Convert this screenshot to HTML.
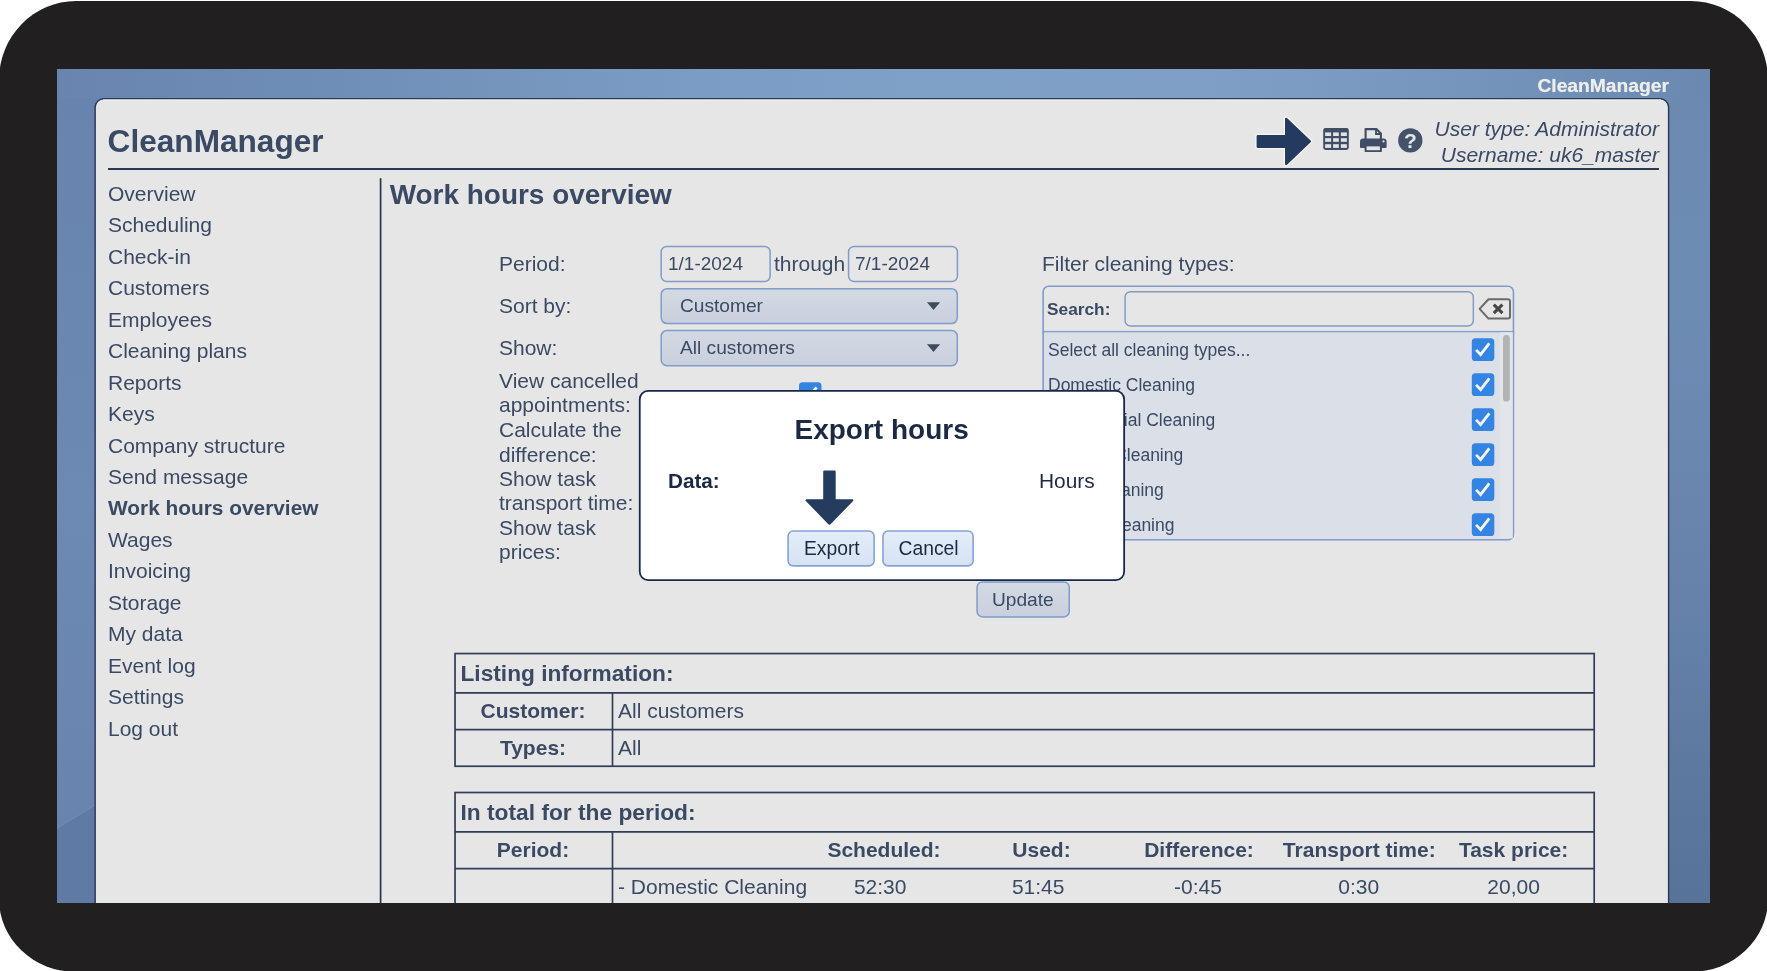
<!DOCTYPE html>
<html lang="en">
<head>
<meta charset="utf-8">
<title>CleanManager - Work hours overview</title>
<style>
html,body{margin:0;padding:0;}
body{width:1767px;height:971px;position:relative;overflow:hidden;background:#fff;
  font-family:"Liberation Sans",Arial,Helvetica,sans-serif;color:#3b4a64;}
.abs,.t{position:absolute;}
.t{white-space:nowrap;line-height:1;font-size:21px;}
.b{font-weight:bold;}
.frame{left:-1px;top:1px;width:1769px;height:971px;background:#211f20;border-radius:77px 77px 77px 77px / 79px 79px 73px 73px;}
.screen{left:57px;top:69px;width:1653px;height:834px;overflow:hidden;
  background:linear-gradient(90deg,#6985af 0%,#6b88b2 6%,#6e8db6 15%,#7595bd 27%,#7b9cc4 39%,#7fa0c7 52%,#7f9fc6 69%,#7a9ac1 78%,#7696bd 84%,#6f8eb5 93%,#6b89b0 100%);}
.screen .ls{left:0;top:29px;width:40px;height:805px;background:linear-gradient(180deg,#6884ae 0%,#6a88b2 40%,#6c8ab4 50%,#6985b0 80%,#6783ae 92%,#6380aa 100%);}
.screen .rs{right:0;top:29px;width:43px;height:805px;background:linear-gradient(180deg,#6c8ab1 0%,#6d8cb4 25%,#6884ad 55%,#6380a8 68%,#5c789f 85%,#58739a 100%);}
.menu .t{left:108px;}

.li .t{left:1048px;font-size:17.5px;}
</style>
</head>
<body>
<div id="root" style="position:absolute;left:0;top:0;width:1767px;height:971px;will-change:transform;">
<div class="abs frame"></div>
<div class="abs screen">
  <div class="abs ls"></div><div class="abs rs"></div><svg class="abs" style="left:0;top:700px;" width="40" height="134" viewBox="57 769 40 134"><path d="M57 828.5 L97 804.5 V903 H57 Z" fill="#5f7ba5"/><path d="M57 828 L97 804" stroke="#7590b8" stroke-width="1.1" stroke-opacity=".6" fill="none"/></svg>
  <svg class="abs" style="left:0;top:0;" width="1653" height="834" viewBox="57 69 1653 834"><rect x="95.15" y="98.7" width="1573.45" height="900" rx="8.6" fill="#e6e6e6" stroke="#2d3a54" stroke-width="1.45"/><rect x="103" y="99.45" width="1558" height="1" fill="#fbfbfb" opacity=".85"/></svg>
</div>

<!-- top-right brand -->
<div class="t b" style="right:98px;top:76px;font-size:19.25px;color:#ededec;text-shadow:0 0 .7px rgba(237,237,236,.8);">CleanManager</div>

<!-- header -->
<div class="t b" style="left:107.6px;top:126px;font-size:31.6px;">CleanManager</div>
<div class="abs" style="left:108px;top:168px;width:1551px;height:2px;background:#2a3853;"></div>
<div class="t" style="right:108px;top:117.7px;font-size:21px;font-style:italic;">User type: Administrator</div>
<div class="t" style="right:108px;top:143.9px;font-size:21px;font-style:italic;">Username: uk6_master</div>

<!-- sidebar -->
<div class="menu">
<div class="t" style="top:183px;">Overview</div>
<div class="t" style="top:214px;">Scheduling</div>
<div class="t" style="top:246px;">Check-in</div>
<div class="t" style="top:277px;">Customers</div>
<div class="t" style="top:309px;">Employees</div>
<div class="t" style="top:340px;">Cleaning plans</div>
<div class="t" style="top:372px;">Reports</div>
<div class="t" style="top:403px;">Keys</div>
<div class="t" style="top:435px;">Company structure</div>
<div class="t" style="top:466px;">Send message</div>
<div class="t b" style="top:498px;font-size:20.85px;">Work hours overview</div>
<div class="t" style="top:529px;">Wages</div>
<div class="t" style="top:560px;">Invoicing</div>
<div class="t" style="top:592px;">Storage</div>
<div class="t" style="top:623px;">My data</div>
<div class="t" style="top:655px;">Event log</div>
<div class="t" style="top:686px;">Settings</div>
<div class="t" style="top:718px;">Log out</div>
</div>
<svg class="abs" style="left:378px;top:178px;" width="5" height="725" viewBox="378 178 5 725"><rect x="379.75" y="178.2" width="1.7" height="726" fill="#27354f"/></svg>

<!-- title -->
<div class="t b" style="left:389.7px;top:181px;font-size:27.95px;">Work hours overview</div>


<!-- form -->
<div class="t" style="left:499px;top:253px;">Period:</div>
<svg class="abs" style="left:659px;top:244px;" width="113" height="40" viewBox="659 244 113 40"><rect x="661.17" y="246.48" width="108.95" height="35.05" rx="5.5" fill="#e6e6e6" stroke="#7f9cca" stroke-width="1.5"/></svg>
<div class="t" style="left:668px;top:254px;font-size:19px;">1/1-2024</div>
<div class="t" style="left:774px;top:253px;">through</div>
<svg class="abs" style="left:846px;top:244px;" width="114" height="40" viewBox="846 244 114 40"><rect x="848.57" y="246.48" width="108.85" height="35.05" rx="5.5" fill="#e6e6e6" stroke="#7f9cca" stroke-width="1.5"/></svg>
<div class="t" style="left:855px;top:254px;font-size:19px;">7/1-2024</div>

<div class="t" style="left:499px;top:295px;">Sort by:</div>
<svg class="abs" style="left:659px;top:287px;" width="301" height="38" viewBox="659 287 301 38"><defs><linearGradient id="gs" x1="0" y1="0" x2="0" y2="1"><stop offset="0" stop-color="#d3dae3"/><stop offset="1" stop-color="#c9d0dd"/></linearGradient><linearGradient id="gb" x1="0" y1="0" x2="0" y2="1"><stop offset="0" stop-color="#e4edf9"/><stop offset="1" stop-color="#d6e2f3"/></linearGradient></defs><rect x="661.2" y="288.65" width="296.1" height="34.9" rx="5.8" fill="url(#gs)" stroke="#7f9cca" stroke-width="1.5"/></svg>
<div class="t" style="left:680px;top:296px;font-size:19.15px;">Customer</div>
<svg class="abs" style="left:925px;top:300px;" width="18" height="12" viewBox="925 300 18 12"><path d="M926.9 302.3 H940.1 L933.5 310 Z" fill="#3f4a60"/></svg>

<div class="t" style="left:499px;top:337px;">Show:</div>
<svg class="abs" style="left:659px;top:328px;" width="301" height="39" viewBox="659 328 301 39"><defs><linearGradient id="gs" x1="0" y1="0" x2="0" y2="1"><stop offset="0" stop-color="#d3dae3"/><stop offset="1" stop-color="#c9d0dd"/></linearGradient><linearGradient id="gb" x1="0" y1="0" x2="0" y2="1"><stop offset="0" stop-color="#e4edf9"/><stop offset="1" stop-color="#d6e2f3"/></linearGradient></defs><rect x="661.2" y="330.45" width="296.1" height="35.2" rx="5.8" fill="url(#gs)" stroke="#7f9cca" stroke-width="1.5"/></svg>
<div class="t" style="left:680px;top:338px;font-size:19.15px;">All customers</div>
<svg class="abs" style="left:925px;top:342px;" width="18" height="12" viewBox="925 342 18 12"><path d="M926.9 344.3 H940.1 L933.5 352 Z" fill="#3f4a60"/></svg>

<div class="t" style="left:499px;top:370px;">View cancelled</div>
<div class="t" style="left:499px;top:394px;">appointments:</div>
<div class="t" style="left:499px;top:419px;">Calculate the</div>
<div class="t" style="left:499px;top:444px;">difference:</div>
<div class="t" style="left:499px;top:468px;">Show task</div>
<div class="t" style="left:499px;top:492px;">transport time:</div>
<div class="t" style="left:499px;top:517px;">Show task</div>
<div class="t" style="left:499px;top:541px;">prices:</div>
<svg class="abs" style="left:799px;top:382px;" width="25" height="25" viewBox="0 0 25 25"><g transform="translate(0.00 0.30)"><rect x="0" y="0" width="22.5" height="22.7" rx="3.6" fill="#3484e4"/><path d="M4.3 11.6 L8.8 16.3 L17.5 5.0" fill="none" stroke="#fbf8f2" stroke-width="2.8" stroke-linejoin="miter"/></g></svg>

<!-- filter -->
<div class="t" style="left:1042px;top:253px;">Filter cleaning types:</div>
<svg class="abs" style="left:1041px;top:284px;" width="476" height="258" viewBox="1041 284 476 258"><defs><clipPath id="fc"><rect x="1042.4" y="285.5" width="471.8" height="255" rx="5.5"/></clipPath></defs><g clip-path="url(#fc)"><rect x="1042" y="285" width="473" height="47" fill="#e6e6e6"/><rect x="1042" y="331.6" width="473" height="209" fill="#dadfe8"/><rect x="1042" y="330.9" width="473" height="1.4" fill="#839fcb"/></g><rect x="1043.15" y="286.25" width="470.3" height="253.5" rx="5.5" fill="none" stroke="#7f9cca" stroke-width="1.6"/></svg>
<div class="t b" style="left:1047px;top:300.5px;font-size:17.3px;">Search:</div>
<svg class="abs" style="left:1123px;top:290px;" width="353" height="38" viewBox="1123 290 353 38"><rect x="1125.08" y="291.68" width="348.25" height="34.35" rx="5.5" fill="#e6e6e6" stroke="#7f9cca" stroke-width="1.5"/></svg>
<svg class="abs" style="left:1477.4px;top:296px;" width="36" height="26" viewBox="0 0 36 26"><path d="M11.5 3.2 H31 a2 2 0 0 1 2 2 V20.6 a2 2 0 0 1 -2 2 H11.5 L2.6 12.9 Z" fill="none" stroke="#6a6a6a" stroke-width="2" stroke-linejoin="round"/><path d="M16.8 8.6 L25.4 17.2 M25.4 8.6 L16.8 17.2" stroke="#474747" stroke-width="3.1" stroke-linecap="butt"/></svg>
<div class="li">
<div class="t" style="top:341.5px;">Select all cleaning types...</div>
<div class="t" style="top:376.5px;">Domestic Cleaning</div>
<div class="t" style="top:411.5px;">Commercial Cleaning</div>
<div class="t" style="top:446.5px;">Regular Cleaning</div>
<div class="t" style="top:481.5px;">Deep Cleaning</div>
<div class="t" style="top:516.5px;">Carpet Cleaning</div>
</div>
<svg class="abs" style="left:1499px;top:332px;" width="15" height="208" viewBox="1499 332 15 208"><rect x="1499.8" y="332.3" width="12.9" height="206.2" fill="#e3e5e9"/><rect x="1503" y="335" width="6.8" height="66.6" rx="3.4" fill="#b3b3b3"/></svg>
<svg class="abs" style="left:1471px;top:338px;" width="25" height="25" viewBox="0 0 25 25"><g transform="translate(0.80 0.30)"><rect x="0" y="0" width="22.5" height="22.7" rx="3.6" fill="#3484e4"/><path d="M4.3 11.6 L8.8 16.3 L17.5 5.0" fill="none" stroke="#fbf8f2" stroke-width="2.8" stroke-linejoin="miter"/></g></svg>
<svg class="abs" style="left:1471px;top:373px;" width="25" height="25" viewBox="0 0 25 25"><g transform="translate(0.80 0.30)"><rect x="0" y="0" width="22.5" height="22.7" rx="3.6" fill="#3484e4"/><path d="M4.3 11.6 L8.8 16.3 L17.5 5.0" fill="none" stroke="#fbf8f2" stroke-width="2.8" stroke-linejoin="miter"/></g></svg>
<svg class="abs" style="left:1471px;top:408px;" width="25" height="25" viewBox="0 0 25 25"><g transform="translate(0.80 0.30)"><rect x="0" y="0" width="22.5" height="22.7" rx="3.6" fill="#3484e4"/><path d="M4.3 11.6 L8.8 16.3 L17.5 5.0" fill="none" stroke="#fbf8f2" stroke-width="2.8" stroke-linejoin="miter"/></g></svg>
<svg class="abs" style="left:1471px;top:443px;" width="25" height="25" viewBox="0 0 25 25"><g transform="translate(0.80 0.30)"><rect x="0" y="0" width="22.5" height="22.7" rx="3.6" fill="#3484e4"/><path d="M4.3 11.6 L8.8 16.3 L17.5 5.0" fill="none" stroke="#fbf8f2" stroke-width="2.8" stroke-linejoin="miter"/></g></svg>
<svg class="abs" style="left:1471px;top:478px;" width="25" height="25" viewBox="0 0 25 25"><g transform="translate(0.80 0.30)"><rect x="0" y="0" width="22.5" height="22.7" rx="3.6" fill="#3484e4"/><path d="M4.3 11.6 L8.8 16.3 L17.5 5.0" fill="none" stroke="#fbf8f2" stroke-width="2.8" stroke-linejoin="miter"/></g></svg>
<svg class="abs" style="left:1471px;top:513px;" width="25" height="25" viewBox="0 0 25 25"><g transform="translate(0.80 0.30)"><rect x="0" y="0" width="22.5" height="22.7" rx="3.6" fill="#3484e4"/><path d="M4.3 11.6 L8.8 16.3 L17.5 5.0" fill="none" stroke="#fbf8f2" stroke-width="2.8" stroke-linejoin="miter"/></g></svg>

<!-- update button -->
<svg class="abs" style="left:975px;top:580px;" width="97" height="40" viewBox="975 580 97 40"><defs><linearGradient id="gs" x1="0" y1="0" x2="0" y2="1"><stop offset="0" stop-color="#d3dae3"/><stop offset="1" stop-color="#c9d0dd"/></linearGradient><linearGradient id="gb" x1="0" y1="0" x2="0" y2="1"><stop offset="0" stop-color="#e4edf9"/><stop offset="1" stop-color="#d6e2f3"/></linearGradient></defs><rect x="977.05" y="581.95" width="92.2" height="35.0" rx="5.5" fill="url(#gs)" stroke="#7f9cca" stroke-width="1.5"/></svg>
<div class="t" style="left:992px;top:589.5px;font-size:19.15px;">Update</div>

<!-- table 1 -->
<svg class="abs" style="left:450px;top:648px;" width="1150" height="255" viewBox="450 648 1150 255"><g fill="none" stroke="#303e59" stroke-width="1.7"><rect x="455.05" y="653.55" width="1139.15" height="112.7"/><path d="M455 692.8 H1594.2 M455 729.6 H1594.2 M612.5 692.8 V766.2"/><rect x="455.05" y="792.5" width="1139.15" height="140"/><path d="M455 831.9 H1594.2 M455 868.6 H1594.2 M612.5 831.9 V910"/></g></svg>
<div class="t b" style="left:460.5px;top:662px;font-size:22.7px;">Listing information:</div>
<div class="t b" style="left:454px;width:158px;text-align:center;top:700px;font-size:21px;">Customer:</div>
<div class="t" style="left:618px;top:700px;">All customers</div>
<div class="t b" style="left:454px;width:158px;text-align:center;top:737px;font-size:21px;">Types:</div>
<div class="t" style="left:618px;top:737px;">All</div>

<!-- table 2 -->
<div class="t b" style="left:460.5px;top:801px;font-size:22.75px;">In total for the period:</div>
<div class="t b" style="left:454px;width:158px;text-align:center;top:839px;font-size:21px;">Period:</div>
<div class="t b" style="left:784px;width:200px;text-align:center;top:839px;font-size:21px;">Scheduled:</div>
<div class="t b" style="left:941.5px;width:200px;text-align:center;top:839px;font-size:21px;">Used:</div>
<div class="t b" style="left:1099px;width:200px;text-align:center;top:839px;font-size:21px;">Difference:</div>
<div class="t b" style="left:1259.3px;width:200px;text-align:center;top:839px;font-size:21px;">Transport time:</div>
<div class="t b" style="left:1413.6px;width:200px;text-align:center;top:839px;font-size:21px;">Task price:</div>
<div class="t" style="left:618px;top:876px;">- Domestic Cleaning</div>
<div class="t" style="left:780.2px;width:200px;text-align:center;top:876px;">52:30</div>
<div class="t" style="left:938.2px;width:200px;text-align:center;top:876px;">51:45</div>
<div class="t" style="left:1098px;width:200px;text-align:center;top:876px;">-0:45</div>
<div class="t" style="left:1258.7px;width:200px;text-align:center;top:876px;">0:30</div>
<div class="t" style="left:1413.6px;width:200px;text-align:center;top:876px;">20,00</div>

<!-- dialog -->
<svg class="abs" style="left:637px;top:388px;" width="490" height="195" viewBox="637 388 490 195"><rect x="639.75" y="390.85" width="484.4" height="189.2" rx="8.3" fill="#fff" stroke="#19294a" stroke-width="1.8"/></svg>
<div class="t b" style="left:794.5px;top:415.5px;font-size:28px;color:#1b2944;">Export hours</div>
<div class="t b" style="left:668px;top:470.5px;font-size:20.7px;color:#1b2944;">Data:</div>
<div class="t" style="left:1039px;top:470.5px;font-size:20.9px;color:#1b2944;">Hours</div>
<svg class="abs" style="left:802px;top:467px;" width="56" height="62" viewBox="0 0 56 62"><path d="M22.3 4.7 H32.6 V33.3 H50.3 L27.45 56.7 L4.6 33.3 H22.3 Z" fill="#253c5f" stroke="#253c5f" stroke-width="2.2" stroke-linejoin="round"/></svg>
<svg class="abs" style="left:786px;top:529px;" width="90" height="39" viewBox="786 529 90 39"><defs><linearGradient id="gs" x1="0" y1="0" x2="0" y2="1"><stop offset="0" stop-color="#d3dae3"/><stop offset="1" stop-color="#c9d0dd"/></linearGradient><linearGradient id="gb" x1="0" y1="0" x2="0" y2="1"><stop offset="0" stop-color="#e4edf9"/><stop offset="1" stop-color="#d6e2f3"/></linearGradient></defs><rect x="788.07" y="531.0" width="86.05" height="34.9" rx="5.2" fill="url(#gb)" stroke="#86a3d3" stroke-width="1.6"/></svg>
<div class="t" style="left:804px;top:538.5px;font-size:19.3px;color:#1b2944;">Export</div>
<svg class="abs" style="left:881px;top:529px;" width="94" height="39" viewBox="881 529 94 39"><defs><linearGradient id="gs" x1="0" y1="0" x2="0" y2="1"><stop offset="0" stop-color="#d3dae3"/><stop offset="1" stop-color="#c9d0dd"/></linearGradient><linearGradient id="gb" x1="0" y1="0" x2="0" y2="1"><stop offset="0" stop-color="#e4edf9"/><stop offset="1" stop-color="#d6e2f3"/></linearGradient></defs><rect x="882.97" y="531.0" width="90.15" height="34.9" rx="5.2" fill="url(#gb)" stroke="#86a3d3" stroke-width="1.6"/></svg>
<div class="t" style="left:898.6px;top:538.5px;font-size:19.3px;color:#1b2944;">Cancel</div>

<!-- header icons -->
<svg class="abs" style="left:1250px;top:110px;" width="70" height="60" viewBox="0 0 70 60"><path d="M7.8 26.2 H36.2 V8.9 L59.8 31.3 L36.2 53.9 V36.8 H7.8 Z" fill="#f6f6f6" stroke="#f6f6f6" stroke-width="5" stroke-linejoin="round"/><path d="M7.8 26.2 H36.2 V8.9 L59.8 31.3 L36.2 53.9 V36.8 H7.8 Z" fill="#243b5f" stroke="#243b5f" stroke-width="2.4" stroke-linejoin="round"/></svg>
<svg class="abs" style="left:1323px;top:128.2px;" width="26" height="22" viewBox="0 0 25.6 22"><rect x="0" y="0" width="25.6" height="22" rx="2.4" fill="#3f4d66"/><g fill="#e3e3e4"><rect x="1.9" y="4.4" width="6" height="3.6"/><rect x="9.9" y="4.4" width="5.7" height="3.6"/><rect x="17.7" y="4.4" width="6" height="3.6"/><rect x="1.9" y="10.2" width="6" height="3.6"/><rect x="9.9" y="10.2" width="5.7" height="3.6"/><rect x="17.7" y="10.2" width="6" height="3.6"/><rect x="1.9" y="16.2" width="6" height="3.7"/><rect x="9.9" y="16.2" width="5.7" height="3.7"/><rect x="17.7" y="16.2" width="6" height="3.7"/></g></svg>
<svg class="abs" style="left:1360.4px;top:128.2px;" width="27" height="25" viewBox="0 0 27 25"><path d="M5.6 11.5 V1.1 H16.4 L20.9 5.6 V11.5" fill="none" stroke="#3f4d66" stroke-width="2.1" stroke-linejoin="round"/><path d="M16 1 V6 H21" fill="none" stroke="#3f4d66" stroke-width="1.8"/><path d="M3.2 10.6 H23.4 a3.2 3.2 0 0 1 3.2 3.2 V19 a0.9 0.9 0 0 1 -0.9 0.9 H0.9 a0.9 0.9 0 0 1 -0.9 -0.9 V13.8 a3.2 3.2 0 0 1 3.2 -3.2 Z" fill="#3f4d66"/><rect x="4.6" y="16.6" width="17.3" height="7.5" rx="0.8" fill="#3f4d66"/><rect x="6.6" y="18.4" width="13.3" height="3.8" fill="#e6e6e6"/><circle cx="23.5" cy="13.4" r="1.05" fill="#e6e6e6"/></svg>
<svg class="abs" style="left:1398px;top:128px;" width="25" height="25" viewBox="0 0 25 25"><circle cx="12.3" cy="12.4" r="12.15" fill="#44526a"/><text x="12.4" y="20.1" text-anchor="middle" font-family="Liberation Sans, Arial, sans-serif" font-weight="bold" font-size="21" fill="#e6e6e6">?</text></svg>
</div>
</body>
</html>
